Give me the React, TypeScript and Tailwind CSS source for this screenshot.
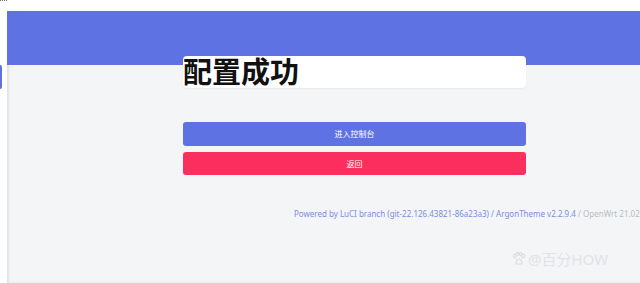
import React from "react";

export default function App() {
  const font = { fontFamily: '"Noto Sans", "Noto Sans CJK SC", sans-serif' };
  return (
    <div
      className="relative h-[283px] w-[640px] overflow-hidden bg-white"
      style={font}
    >
      <div className="absolute left-0 top-0 h-[2px] w-[7px] border-t border-dotted border-gray-500" />
      <div className="flex h-full pt-[11px]">
        <div className="relative w-[7px] shrink-0 bg-white">
          <div className="absolute left-0 top-[54px] h-[24px] w-[2px] rounded-r-[2px] bg-[#5e72e4]" />
        </div>
        <div className="flex flex-1 flex-col bg-[#f4f5f7] shadow-[inset_2px_0_2px_rgba(0,0,0,0.08)]">
          <div className="h-[54px] shrink-0 bg-[#5e72e4]" />
          <div className="-mt-[9px] ml-[176px] flex h-[32px] w-[343px] items-center rounded-[4px] bg-white shadow-[0_1px_2px_rgba(0,0,0,0.05)]">
            <h2 className="text-[29px] font-bold leading-[32px] text-[#111]">配置成功</h2>
          </div>
          <div className="ml-[176px] mt-[34px] flex w-[343px] flex-col gap-[6px]">
            <button className="flex h-[24px] items-center justify-center rounded-[3px] bg-[#5e72e4] text-[8px] text-white">
              进入控制台
            </button>
            <button className="flex h-[23px] items-center justify-center rounded-[3px] bg-[#fb2f5e] text-[8px] text-white">
              返回
            </button>
          </div>
          <div className="ml-[287px] mt-[33px] whitespace-nowrap text-[8px] leading-[12px] text-[#7c8ce0]">
            Powered by LuCI branch (git-22.126.43821-86a23a3) / ArgonTheme v2.2.9.4{" "}
            <span className="text-[#b8bcc6]">/ OpenWrt 21.02.</span>
          </div>
        </div>
      </div>
      <div className="absolute left-[512px] top-[250px] flex items-center gap-[2px] text-[15px] leading-[18px] text-[#e2e3e6]">
        <svg width="14" height="14" viewBox="0 0 14 14" fill="none" stroke="#dcdde0" strokeWidth="1.2">
          <ellipse cx="3" cy="4" rx="1.4" ry="1.8" />
          <ellipse cx="11" cy="4" rx="1.4" ry="1.8" />
          <ellipse cx="5.5" cy="2" rx="1.2" ry="1.5" />
          <ellipse cx="8.5" cy="2" rx="1.2" ry="1.5" />
          <path d="M4 12 C4 8.5 6 7 7 7 C8 7 10 8.5 10 12 Z" />
        </svg>
        <span>@百分HOW</span>
      </div>
    </div>
  );
}
